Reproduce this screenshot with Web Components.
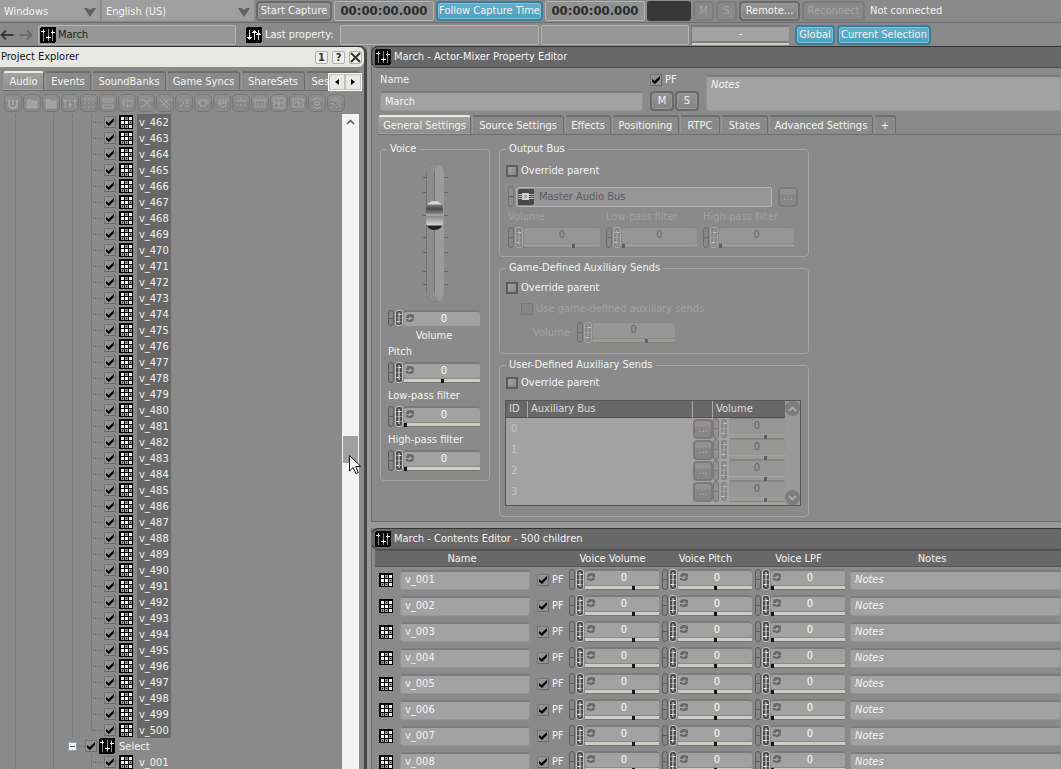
<!DOCTYPE html>
<html lang="en">
<head>
<meta charset="utf-8">
<title>March - Actor-Mixer</title>
<style>
html,body{margin:0;height:100%;background:#8a8a8a}
body{font:11px/14px "DejaVu Sans Condensed","Noto Sans",sans-serif;color:#f4f4f2;overflow:hidden}
</style>
</head>
<body>
<audio-workbench></audio-workbench>
<script>
const base = `*{box-sizing:border-box}
:host{box-sizing:border-box}
:host([hidden]){display:none}
button,input,textarea,select{font:inherit;color:inherit;margin:0;padding:0;border:0;outline:0;border-radius:0;min-width:0}
svg{display:block;flex:none}`;

function define(name, css, render) {
  customElements.define(name, class extends HTMLElement {
    connectedCallback() {
      if (this.shadowRoot) return;
      const root = this.attachShadow({ mode: 'open' });
      root.innerHTML = `<style>${base}${css}</style>${render(this)}`;
    }
  });
}

/* ---------- icons ---------- */
const glyphs = {
  mixer: `<svg width="16" height="16" viewBox="0 0 16 16" shape-rendering="crispEdges"><rect width="16" height="16" rx="2" fill="#050505"/><path d="M3 2h1v12H3zM8 2h1v12H8zM12 2h1v12h-1z" fill="#8c8c8c"/><path d="M1 4h4v1H1zM6 10h5v1H6zM11 5h4v1h-4zM3 3h1v3H3zM8 9h1v3H8zM12 4h1v3h-1z" fill="#fff"/></svg>`,
  property: `<svg width="16" height="16" viewBox="0 0 16 16" shape-rendering="crispEdges"><rect width="16" height="16" rx="2" fill="#050505"/><path d="M3 3h1v10H3zM8 3h1v10H8zM12 3h1v10h-1z" fill="#d8d8d8"/><path d="M1 10h5v1H1zM2 11h3v1H2zM6 5h5v1H6zM7 4h3v1H7zM10 7h5v1h-5zM11 6h3v1h-3z" fill="#fff"/></svg>`,
  sound: `<svg width="14" height="14" viewBox="0 0 14 14" shape-rendering="crispEdges"><rect width="14" height="14" rx="1" fill="#000"/><path d="M2 2h3v3H2zM10 2h3v3h-3zM2 6h3v3H2zM6 6h3v3H6z" fill="#fff"/><path d="M6 2h3v3H6zM10 6h3v3h-3zM2 10h3v3H2zM6 10h3v3H6z" fill="#9a9a9a"/><path d="M10 10h3v3h-3z" fill="#eee"/><path d="M7 3h1v1H7zM11 7h1v1h-1zM3 11h1v1H3zM7 11h1v1H7z" fill="#111"/></svg>`,
  bus: `<svg width="16" height="16" viewBox="0 0 16 16" shape-rendering="crispEdges"><rect width="16" height="16" rx="2" fill="#484848"/><path d="M0 5h16v1H0zM0 7h16v1H0zM0 9h16v1H0z" fill="#b4b4b4"/><path d="M4 4h7v7H4z" fill="#d0d0d0"/><path d="M6 6h3v3H6z" fill="#a4a4a4"/></svg>`,
  back: `<svg width="14" height="12" viewBox="0 0 14 12"><path d="M13.500 6H2M6 1.500L1.500 6 6 10.500" stroke="#3a3a3a" stroke-width="2" fill="none"/></svg>`,
  forward: `<svg width="14" height="12" viewBox="0 0 14 12"><path d="M.5 6H12M8 1.500L12.500 6 8 10.500" stroke="#696969" stroke-width="2" fill="none"/></svg>`,
  drop: `<svg width="12" height="10" viewBox="0 0 12 10"><path d="M0 1h3l3 2 3-2h3L6 10z" fill="#606060"/></svg>`,
  spin: `<svg width="8" height="8" viewBox="0 0 8 8"><path d="M0 4Q0 0 4 0q2 0 3 1l1-.5V4H5l1-1Q4 1.500 2.500 4zM8 4.500Q8 8 4 8 2 8 1 7L0 7.500V5h3L2 6q2 1 3.500-1.500z" fill="#686868"/></svg>`,
  up: `<svg width="9" height="6" viewBox="0 0 9 6"><path d="M1 5l3.500-3.500L8 5" stroke="#555" stroke-width="1.500" fill="none"/></svg>`,
  cursor: `<svg width="13" height="20" viewBox="0 0 13 20"><path d="M.5.5v15.500l3.700-3.500 2.600 6 2.500-1-2.500-6h5z" fill="#f6f6f6" stroke="#14142c"/></svg>`
};
define('ui-icon', ':host{display:block;flex:none}', el => glyphs[el.getAttribute('name')]);

/* ---------- push button ---------- */
define('push-button', `
:host{display:flex;flex:none;height:20px}
button{flex:1;white-space:nowrap;border:2px solid #6a6a6a;border-radius:4px;background:linear-gradient(#989492,#8e8e8e 35%,#848484);box-shadow:inset 0 0 0 1px #979797;line-height:14px;text-align:center}
:host([tone=blue]) button{border-color:#387f99;background:linear-gradient(#62afcc,#509fbf);box-shadow:inset 0 0 0 1px #7cc0d8}
:host([off]) button{border-color:#7c7c7c;background:#898989;color:#a5a5a5;box-shadow:none}
:host([more]) button{border-color:#7b7b7b;background:linear-gradient(#96908e 30%,#868686 40%);color:#b4b4b4;box-shadow:none}
`, el => `<button type="button" ${el.hasAttribute('off') || el.hasAttribute('more') ? 'disabled' : ''}><slot></slot></button>`);

/* ---------- check box ---------- */
define('check-box', `
:host{display:block;flex:none}
label{display:flex;align-items:center;gap:3px;height:16px;white-space:nowrap}
span{position:relative;width:12px;height:12px;flex:none}
input{display:block;appearance:none;width:12px;height:12px;border:1px solid #767676;border-bottom-color:#6a6a6a;border-right-color:#6a6a6a;background:#929292}
:host([empty]) input{border:2px solid #5c5c5c;background:linear-gradient(135deg,#a4a4a4,#858585)}
:host([off]){color:#a2a2a2}
:host([off]) input{border:1px solid #787878;background:#868686}
svg{position:absolute;left:2px;top:2px;pointer-events:none}
input:not(:checked)+svg{display:none}
`, el => `<label><span><input type="checkbox" aria-label="${el.getAttribute('label') || el.textContent}" ${el.hasAttribute('checked') ? 'checked' : ''} ${el.hasAttribute('off') ? 'disabled' : ''}><svg width="8" height="8" viewBox="0 0 8 8"><path d="M0 3l2.500 2L8 0v3L3 8 0 5.500z" fill="#000"/></svg></span><slot></slot></label>`);

/* ---------- link pill and numeric field ---------- */
define('link-pill', `
:host{display:block;flex:none;width:6px;height:21px;border:1px solid #5c5c5c;border-radius:3px;background:linear-gradient(#5c5c5c,#5c5c5c) 0 50%/100% 1px no-repeat #868686}
:host([off]){border-color:#757575;background-color:#8e8e8e}
`, () => '');

define('value-field', `
:host{display:flex;gap:1px;height:21px}
:host([bare]){height:16px}
link-pill{height:100%}
.curve{flex:none;width:8px;height:100%;border:1px solid #c4c4c4;border-radius:3px;background:#4c4c4c;overflow:hidden}
.main{flex:1;min-width:0;display:flex;flex-direction:column;gap:1px}
.box{flex:1;position:relative;border-top:2px solid #7b7b7b;border-radius:3px 3px 2px 2px;background:#a2a2a2}
ui-icon{position:absolute;left:2px;top:2px}
.num{display:block;width:100%;height:13px;line-height:13px;background:none;text-align:center;color:#fffaf2;padding-left:4px}
:host([bare]) .num{height:13px}
.bar{display:block;appearance:none;width:100%;height:4px;background:linear-gradient(#cfcdc2 75%,#777 0);}
.bar::-webkit-slider-thumb{appearance:none;width:3px;height:4px;background:#10181c}
:host([off]) link-pill{opacity:.6}
:host([off]) .curve{background:#868686;border-color:#a6a6a6}
:host([off]) .box{background:#969696;border-top:1px solid #868686}
:host([off]) .num{color:#646464;padding:0}
:host([off]) .bar{background:linear-gradient(#9c9c92 75%,#848484 0)}
:host([off]) .bar::-webkit-slider-thumb{background:#5e5e6a}
`, el => {
  const off = el.hasAttribute('off'), label = el.getAttribute('label') || 'Volume';
  return `<link-pill></link-pill><svg class="curve" viewBox="0 0 6 19" preserveAspectRatio="none"><path d="M0 4.500h6M0 9.500h6M0 14.500h6" stroke="${off ? '#a0a0a0' : '#8a8a8a'}" fill="none"/><path d="M3 2v15" stroke="${off ? '#a8a8a8' : '#eee'}"/><path d="M3 4.500h2M1 14.500h2" stroke="${off ? '#ccc' : '#fff'}"/></svg>
<div class="main"><div class="box">${off ? '' : '<ui-icon name="spin"></ui-icon>'}<input class="num" aria-label="${label}" value="0" ${off ? 'disabled' : ''}></div>${el.hasAttribute('bare') ? '' : `<input class="bar" type="range" aria-label="${label} slider" min="0" max="100" value="${el.getAttribute('at') || 0}" ${off ? 'disabled' : ''}>`}</div>`;
});

/* ---------- text fields ---------- */
define('text-field', `
:host{display:flex;height:20px}
input,textarea{flex:1;width:100%;border:1px solid #959595;border-top:2px solid #7c7c7c;border-radius:3px;background:#a2a2a2;padding:0 4px;resize:none;overflow:hidden}
:host([notes]){font-style:italic}
textarea{padding:1px 4px}
::placeholder{color:#f4f4f2;opacity:1}
`, el => {
  const label = el.getAttribute('label');
  if (el.hasAttribute('multi')) return `<textarea aria-label="${label}" placeholder="Notes"></textarea>`;
  return `<input aria-label="${label}" ${el.hasAttribute('notes') ? 'placeholder="Notes"' : `value="${el.getAttribute('value')}"`}>`;
});

define('path-field', `
:host{display:flex;align-items:center;flex:none;height:20px;border:1px solid #b4b4b4;border-radius:2px;background:#969696;padding-left:1px;gap:2px;white-space:nowrap}
`, () => '<slot></slot>');

define('drop-list', `
:host{display:block;position:relative;height:22px;flex:none}
select{appearance:none;width:100%;height:22px;padding:3px 4px 0 4px;background:#9f9f9f;border-bottom:1px solid #858585}
ui-icon{position:absolute;right:4px;top:7px;pointer-events:none}
`, el => `<select aria-label="${el.getAttribute('label')}"><option>${el.getAttribute('value')}</option></select><ui-icon name="drop"></ui-icon>`);

/* ---------- tabs ---------- */
define('tab-strip', `
:host{display:flex;gap:1px;height:20px;border-bottom:1px solid #6e6e6e;overflow:hidden}
`, () => '<slot></slot>');
define('tab-item', `
:host{display:flex;flex:none}
button{flex:1;white-space:nowrap;background:none;border:1px solid transparent;border-top:2px solid #6d6d6d;border-right-color:#6c6c6c;border-left-color:#979797;padding-top:1px;border-radius:3px 3px 0 0}
:host([active]) button{background:linear-gradient(#a4a2a0,#8f8f8f);border-top-color:#ecece8}
`, el => `<button type="button" role="tab" aria-selected="${el.hasAttribute('active')}"><slot></slot></button>`);

/* ---------- group box ---------- */
define('group-box', `
:host{display:block}
fieldset{margin:0;min-width:0;border:1px solid #a4a4a4;border-radius:4px;padding:0}
legend{margin-left:6px;padding:0 3px;height:14px;line-height:14px}
`, el => `<fieldset><legend>${el.getAttribute('legend')}</legend><slot></slot></fieldset>`);

/* ---------- fader ---------- */
define('volume-fader', `
:host{display:block;position:relative;width:26px;height:140px}
input{position:absolute;left:4px;top:0;appearance:none;writing-mode:vertical-lr;direction:rtl;width:17px;height:140px;background:none}
input::-webkit-slider-thumb{appearance:none;width:17px;height:29px;border-radius:8px;background:linear-gradient(#d8d8d8 0 3px,#777 4px,#4c4c4c 8px,#858585 13px,#bcbcbc 14px,#868686 15px,#d2d2d2 24px,#222 25px 29px)}
`, () => `<svg width="26" height="140" viewBox="0 0 26 140"><rect x="4.500" y=".5" width="17" height="138" rx="8" fill="#8c8c8c" stroke="#7a7a7a" stroke-dasharray="1 1"/><path d="M4.500 9v120M12.500 8v122" stroke="#747474"/><path d="M13 8q1-6 5-6 4 3 4 8v118q0 7-4 10-5-1-5-8z" fill="#9b9b9b"/><path d="M1 14.500h4M1 29.500h4M1 52.500h4M1 74.500h4M1 89.500h4M1 108.500h4M1 121.500h4M22 14.500h4M22 29.500h4M22 52.500h4M22 74.500h4M22 89.500h4M22 108.500h4M22 121.500h4" stroke="#666"/></svg><input type="range" aria-label="Voice volume" min="0" max="100" value="66">`);

/* ---------- panel title ---------- */
define('panel-title', `
:host{display:flex;align-items:center;gap:3px;height:22px;flex:none;background:#686868;border:1px solid #333;border-right:0;border-bottom-color:#4a4a4a;border-radius:7px 0 0 7px;padding-left:3px;white-space:nowrap}
h2{margin:0;font:inherit}
`, () => '<ui-icon name="mixer"></ui-icon><h2><slot></slot></h2>');

/* ---------- tree ---------- */
define('tree-row', `
:host{display:flex;align-items:center;height:16px;padding-left:91px;background:
 repeating-linear-gradient(#6a6a6a 0 1px,transparent 1px 2px) 15px 0/1px 100% no-repeat,
 repeating-linear-gradient(#6a6a6a 0 1px,transparent 1px 2px) 53px 0/1px 100% no-repeat,
 repeating-linear-gradient(#6a6a6a 0 1px,transparent 1px 2px) var(--third,72px) 0/1px 100% no-repeat}
i{flex:none;width:13px;height:16px;background:
 repeating-linear-gradient(#6a6a6a 0 1px,transparent 1px 2px) 0 0/1px var(--drop,100%) no-repeat,
 repeating-linear-gradient(90deg,#6a6a6a 0 1px,transparent 1px 2px) 0 8px/11px 1px no-repeat}
:host([last]){--drop:8px}
:host([loose]){--third:-9px}
:host([parent]){--third:-9px;padding-left:68px}
ui-icon{margin:0 4px 0 3px}
span{padding:1px 2px;height:16px;line-height:15px;width:34px;white-space:nowrap}
:host([selected]) span{background:#686868}
:host([parent]) i{width:8px;background-position:-9px 0,0 8px}
:host([parent]) ui-icon{margin:0 2px}
button{width:9px;height:9px;border:1px solid #9aa0a8;background:linear-gradient(#3f62a8,#3f62a8) 50%/5px 1px no-repeat #f4f4f4}
`, el => `${el.hasAttribute('parent') ? '<button type="button" aria-label="Collapse"></button>' : ''}<i></i><check-box checked label="Include ${el.textContent}"></check-box><ui-icon name="${el.hasAttribute('parent') ? 'mixer' : 'sound'}"></ui-icon><span><slot></slot></span>`);

define('tool-icons', `
:host{display:flex;gap:1px;padding:3px 0 2px 4px;height:23px}
button{width:18px;height:18px;border:1px solid #777;border-radius:5px;background:linear-gradient(#8e8e8e 45%,#8f8080 45% 52%,#888 52%);display:grid;place-items:center}
`, () => {
  const shapes = [
    'M3 4v4q0 4 4 4t4-4V4M7 4v5', 'M2 12V4l3-1 1 2h6v7z', 'M2 12V4l3-1 1 2h6v7z', 'M2 3v9M7 3v9M12 3v9M1 5h3M5 9h4M10 5h3',
    'M2 3h2M6 3h2M10 3h2M2 7h2M6 7h2M10 7h2M2 11h2M6 11h2M10 11h2', 'M2 3h10v3H2zM2 9h10v3H2z', 'M1 7h3M4 3v8M7 2v10M7 5h5v5H7',
    'M2 3q5 1 10 8M2 11q5-1 10-8', 'M2 4l8 8M6 3l6 7M3 10l8-7', 'M3 3l4 4-4 4M8 4h4M8 7h4M8 10h4', 'M1 7h3M4 4h6v6H4zM10 7h3', 'M2 7h10M5 3v6l3 3 3-3V3M8 3v5',
    'M2 5h10M7 2v3M2 9h2M6 9h2M10 9h2', 'M2 4h10v7H2zM4 8h2M8 8h2', 'M2 2h10v10H2zM2 7h10M7 2v10', 'M2 3h10v8H2zM3 7h3l1-2 1 4 1-2h2', 'M3 4q4-4 8 0M3 11q4 3 8 0M5 6h4v3H5z', 'M2 3q4 0 10 8M2 7q3 0 6 5M6 2q3 1 6 5M2 11l2 1'];
  const names = ['Work unit', 'Folder', 'Virtual folder', 'Actor-mixer', 'Sound', 'Random container', 'Sequence', 'Switch', 'Blend', 'Voice', 'Bus', 'Plug', 'Motion', 'State', 'Track', 'Segment', 'Effect', 'Attenuation'];
  return shapes.map((d, i) => `<button type="button" disabled aria-label="${names[i]}"><svg width="14" height="14" viewBox="0 0 14 14"><path d="${d}" fill="${i == 1 || i == 2 ? '#a5a19f' : 'none'}" stroke="#a8a8a8" stroke-width="${i ? 1 : 2}"/></svg></button>`).join('');
});

define('project-explorer', `
:host{display:flex;flex-direction:column;min-height:0;border-right:3px solid #464646;border-top:1px solid #333;border-top-right-radius:7px}
header{display:flex;align-items:center;gap:4px;height:20px;flex:none;background:#e8e8e3;color:#111;border-radius:0 6px 6px 0;padding:0 2px 0 1px}
h2{font:inherit;margin:0;flex:1}
header button{width:13px;height:13px;border:1px solid #b0b0aa;border-radius:2px;font-weight:bold;line-height:11px;color:#333;display:grid;place-items:center}
.tabs{position:relative;margin:4px 2px 0 3px}
.pager{position:absolute;right:0;top:2px;display:flex;border:1px solid #fff;background:#8a8a8a}
.pager button{width:16px;height:16px;background:#e8e8e4;border:1px solid #c0c0c0;display:grid;place-items:center}
.tree{flex:1;min-height:0;display:flex;margin-right:5px}
.rows{flex:1;overflow:hidden}
.scroll{position:relative;width:17px;background:#f4f4f4;flex:none;display:grid;grid-template-rows:16px 306fr 27fr 306fr;justify-items:center}
.scroll ui-icon{align-self:center}
.thumb{grid-row:3;width:15px;background:#a0a0a0}
.pointer{position:absolute;left:7px;top:52%}
`, () => {
  let rows = '';
  for (let n = 462; n <= 500; n++) rows += `<tree-row selected${n == 500 ? ' last' : ''}>v_${n}</tree-row>`;
  return `<header><h2>Project Explorer</h2><button type="button">1</button><button type="button">?</button><button type="button" aria-label="Close"><svg width="11" height="11" viewBox="0 0 11 11"><path d="M1 1l9 9M10 1L1 10" stroke="#333" stroke-width="2"/></svg></button></header>
<div class="tabs"><tab-strip role="tablist"><tab-item active style="width:41px">Audio</tab-item><tab-item style="width:46px">Events</tab-item><tab-item style="width:74px">SoundBanks</tab-item><tab-item style="width:73px">Game Syncs</tab-item><tab-item style="width:64px">ShareSets</tab-item><tab-item style="width:54px">Sessions</tab-item></tab-strip>
<div class="pager"><button type="button" aria-label="Previous tabs"><svg width="4" height="6"><path d="M4 0v6L0 3z" fill="#000"/></svg></button><button type="button" aria-label="Next tabs"><svg width="4" height="6"><path d="M0 0v6l4-3z" fill="#000"/></svg></button></div></div>
<tool-icons></tool-icons>
<div class="tree"><div class="rows">${rows}<tree-row parent>Select</tree-row><tree-row loose>v_001</tree-row></div>
<div class="scroll"><ui-icon name="up"></ui-icon><div class="thumb"></div><ui-icon class="pointer" name="cursor"></ui-icon></div></div>`;
});

/* ---------- toolbars ---------- */
define('capture-bar', `
:host{display:flex;align-items:center;height:23px;gap:2px;border-bottom:1px solid #6c6c6c;overflow:hidden;white-space:nowrap}
time{flex:none;width:100px;height:20px;border:1px solid #b4b4b4;border-radius:2px;background:#919191;color:#2c2c2c;font-weight:bold;font-size:13px;line-height:18px;text-align:center}
.meter{width:44px;height:20px;border-radius:3px;background:#383838;flex:none}
p{margin:0 0 0 3px}
`, () => `<drop-list label="Platform" value="Windows" style="width:100px"></drop-list><drop-list label="Language" value="English (US)" style="width:152px"></drop-list><push-button style="width:76px">Start Capture</push-button><time>00:00:00.000</time><push-button tone="blue" style="width:107px">Follow Capture Time</push-button><time>00:00:00.000</time><div class="meter"></div><push-button off style="width:21px">M</push-button><push-button off style="width:21px">S</push-button><push-button style="width:61px">Remote...</push-button><push-button off style="width:63px">Reconnect</push-button><p>Not connected</p>`);

define('selection-bar', `
:host{display:flex;align-items:center;height:23px;gap:2px;padding-top:1px;overflow:hidden;white-space:nowrap}
a{display:block;margin-right:3px}
path-field{color:#1c1c1c}
.caption{display:flex;align-items:center;gap:3px;width:94px;margin-left:8px;flex:none}
.slot{width:98px;height:20px;flex:none;border-top:2px solid #777;border-left:1px solid #777;background:linear-gradient(#a2a2a2 14px,#7c7c7c 14px 16px,#d0d0c8 16px);text-align:center;line-height:14px}
.scope{display:flex;gap:2px;margin-left:4px}
`, () => `<a href="#back" aria-label="Back"><ui-icon name="back"></ui-icon></a><a href="#forward" aria-label="Forward"><ui-icon name="forward"></ui-icon></a><path-field style="width:198px"><ui-icon name="mixer"></ui-icon>March</path-field><div class="caption"><ui-icon name="property"></ui-icon>Last property:</div><path-field style="width:199px;margin-left:-2px"></path-field><path-field style="width:148px"></path-field><div class="slot">-</div><div class="scope"><push-button tone="blue" style="width:40px">Global</push-button><push-button tone="blue" style="width:94px">Current Selection</push-button></div>`);

/* ---------- property editor ---------- */
define('voice-group', `
:host{display:block;width:110px;flex:none}
.body{display:flex;flex-direction:column;padding:7px 9px 9px 7px}
volume-fader{margin:0 0 7px 34px}
.centre{text-align:center;margin:3px 0 2px}
label{display:block;margin-bottom:3px}
value-field+label{margin-top:6px}
`, () => `<group-box legend="Voice"><div class="body"><volume-fader></volume-fader><value-field bare></value-field><div class="centre">Volume</div>
<label>Pitch</label><value-field label="Pitch" at="51"></value-field>
<label>Low-pass filter</label><value-field label="Low-pass filter" at="0"></value-field>
<label>High-pass filter</label><value-field label="High-pass filter" at="0"></value-field></div></group-box>`);

define('output-group', `
:host{display:block}
.body{padding:7px 10px 8px 6px}
.bus{display:flex;align-items:center;gap:2px;margin:7px 0 3px 2px}
.bus path-field{flex:1;color:#5c5a66;gap:5px}
.bus push-button{width:20px;margin-left:4px}
.sends{display:grid;grid-template-columns:92px 91px 91px;gap:3px 6px;color:#a2a2a2;padding-left:2px}
.sends value-field{order:1}
label{white-space:nowrap}
`, () => `<group-box legend="Output Bus"><div class="body"><check-box empty>Override parent</check-box>
<div class="bus"><link-pill off></link-pill><path-field><ui-icon name="bus"></ui-icon>Master Audio Bus</path-field><push-button more>...</push-button></div>
<div class="sends"><label>Volume</label><label>Low-pass filter</label><label>High-pass filter</label><value-field off at="66"></value-field><value-field off label="Low-pass filter"></value-field><value-field off label="High-pass filter"></value-field></div></div></group-box>`);

define('game-sends-group', `
:host{display:block}
.body{padding:5px 10px 10px 6px}
.indent{margin:5px 0 5px 15px}
.row{display:flex;align-items:center;gap:7px;padding-left:27px;color:#a2a2a2}
value-field{width:98px}
`, () => `<group-box legend="Game-Defined Auxiliary Sends"><div class="body"><check-box empty>Override parent</check-box><check-box off class="indent">Use game-defined auxiliary sends</check-box><div class="row"><label>Volume</label><value-field off at="66"></value-field></div></div></group-box>`);

define('user-sends-group', `
:host{display:block}
.body{padding:3px 7px 10px 5px}
check-box{margin-left:1px}
.list{display:flex;margin-top:9px;height:106px;border:1px solid #555;background:#a2a2a2}
table{flex:1;width:100%;border-collapse:separate;border-spacing:0;table-layout:fixed;align-self:flex-start}
th{height:17px;line-height:14px;padding:0 0 0 3px;font-weight:normal;text-align:left;color:#dedede;background:#686868;border-right:1px solid #aaa;border-bottom:1px solid #505050}
th:last-child{border-right:0}
td{height:21px;padding:0;color:#c6c6c6}
td:first-child{padding:0 0 0 5px}
push-button{width:20px}
.rail{width:15px;display:flex;flex-direction:column;justify-content:space-between;background:#999;flex:none}
.rail button{height:15px;width:15px;border-radius:8px;background:#7c7c7c;display:grid;place-items:center}
`, () => `<group-box legend="User-Defined Auxiliary Sends"><div class="body"><check-box empty>Override parent</check-box><div class="list"><table><colgroup><col style="width:22px"><col><col style="width:20px"><col style="width:72px"></colgroup><thead><tr><th>ID</th><th>Auxiliary Bus</th><th></th><th>Volume</th></tr></thead><tbody>${[0, 1, 2, 3].map(i => `<tr><td>${i}</td><td></td><td><push-button more>...</push-button></td><td><value-field off at="66"></value-field></td></tr>`).join('')}</tbody></table>
<div class="rail"><button type="button" aria-label="Scroll up"><svg width="9" height="6" viewBox="0 0 9 6"><path d="M1 5l3.500-3.500L8 5" stroke="#aaa" stroke-width="2" fill="none"/></svg></button><button type="button" aria-label="Scroll down"><svg width="9" height="6" viewBox="0 0 9 6"><path d="M1 1l3.500 3.500L8 1" stroke="#aaa" stroke-width="2" fill="none"/></svg></button></div></div></div></group-box>`);

define('property-editor', `
:host{display:block;flex:none;border-left:1px solid #6a6a6a;border-bottom:1px solid #6a6a6a;padding-bottom:4px}
panel-title{margin-left:-1px}
.form{display:grid;grid-template-columns:263px 49px 1fr;grid-template-rows:16px 20px;gap:3px 7px;margin:4px 0 0 8px;align-items:center}
.form text-field[multi]{grid-area:1/3/3/4;height:36px;margin-top:2px}
.pair{display:flex;gap:1px}
.pair push-button{width:24px}
tab-strip{margin:4px 0 7px 6px}
.groups{display:flex;gap:9px;padding-left:8px}
.side{width:310px;flex:none;display:grid;gap:4px;align-content:start}
`, () => `<panel-title>March - Actor-Mixer Property Editor</panel-title>
<div class="form"><label>Name</label><check-box checked>PF</check-box><text-field multi notes label="Notes"></text-field><text-field label="Name" value="March"></text-field><div class="pair"><push-button>M</push-button><push-button>S</push-button></div></div>
<tab-strip role="tablist"><tab-item active style="width:93px">General Settings</tab-item><tab-item style="width:92px">Source Settings</tab-item><tab-item style="width:46px">Effects</tab-item><tab-item style="width:67px">Positioning</tab-item><tab-item style="width:40px">RTPC</tab-item><tab-item style="width:47px">States</tab-item><tab-item style="width:104px">Advanced Settings</tab-item><tab-item style="width:22px">+</tab-item></tab-strip>
<div class="groups"><voice-group></voice-group><div class="side"><output-group></output-group><game-sends-group></game-sends-group><user-sends-group></user-sends-group></div></div>`);

/* ---------- contents editor ---------- */
define('contents-editor', `
:host{display:block;flex:1;min-height:0;overflow:hidden;border-left:1px solid #6a6a6a}
panel-title{margin-left:-1px}
.wrap{padding:0 0 0 3px}
table{width:100%;border-collapse:collapse;table-layout:fixed}
th{height:16px;padding:0;font-weight:normal;background:#686868;border-bottom:1px solid #555;border-top:1px solid #555;line-height:14px}
th:last-child{padding-right:42px}
td{height:26px;padding:0}
td:nth-child(1){padding-left:4px}
td:nth-child(2){padding-left:6px}
td:nth-child(3){padding-left:7px}
td:nth-child(n+4){padding-left:3px}
td:last-child{padding-left:5px}
`, () => `<panel-title>March - Contents Editor - 500 children</panel-title><div class="wrap"><table><colgroup><col style="width:19px"><col style="width:136px"><col style="width:36px"><col style="width:93px"><col style="width:93px"><col style="width:93px"><col></colgroup>
<thead><tr><th></th><th>Name</th><th></th><th>Voice Volume</th><th>Voice Pitch</th><th>Voice LPF</th><th>Notes</th></tr></thead><tbody>${[1, 2, 3, 4, 5, 6, 7, 8].map(i => `<tr><td><ui-icon name="sound"></ui-icon></td><td><text-field label="Name" value="v_00${i}"></text-field></td><td><check-box checked>PF</check-box></td><td><value-field at="66"></value-field></td><td><value-field label="Pitch" at="51"></value-field></td><td><value-field label="Low-pass filter"></value-field></td><td><text-field notes label="Notes"></text-field></td></tr>`).join('')}</tbody></table></div>`);

define('audio-workbench', `
:host{display:flex;flex-direction:column;height:100vh;overflow:hidden}
main{flex:1;min-height:0;display:grid;grid-template-columns:367px 1fr;column-gap:4px;background:linear-gradient(#999,#999) 367px 0/4px 100% no-repeat}
.right{display:flex;flex-direction:column;gap:6px;min-height:0;min-width:0;background:#999}
.right>*{background:#8a8a8a}
`, () => `<capture-bar></capture-bar><selection-bar></selection-bar><main><project-explorer></project-explorer><div class="right"><property-editor></property-editor><contents-editor></contents-editor></div></main>`);
</script>
</body>
</html>
